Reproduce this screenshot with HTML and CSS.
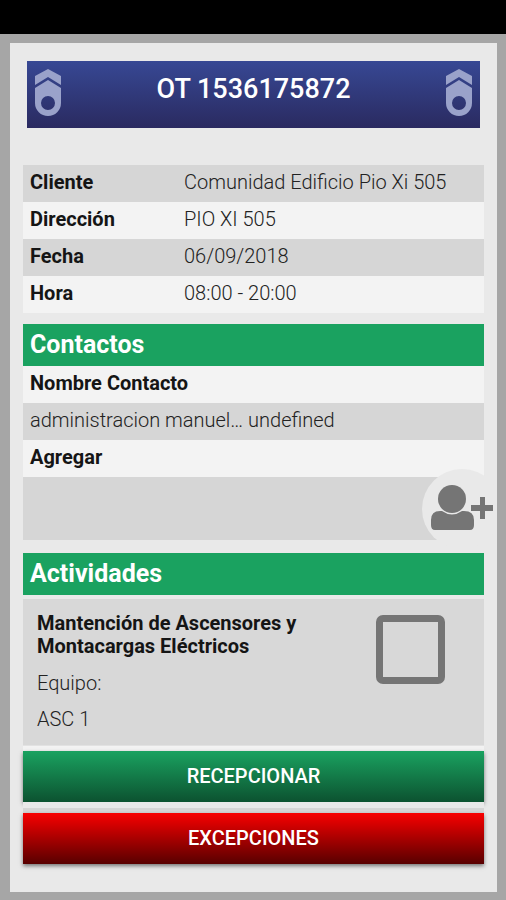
FILE: index.html
```
<!DOCTYPE html>
<html lang="es">
<head>
    <meta charset="UTF-8">
    <meta name="viewport" content="width=device-width, initial-scale=1.0">
    <title>OT 1536175872</title>
    <link rel="stylesheet" href="styles.css">
</head>
<body>
    <div class="status-bar"></div>

    <div class="container">
        <div class="header">
            <svg class="logo" viewBox="0 0 26 48" aria-hidden="true">
                <path d="M0 16V7L13 0l13 7v9L13 8z"/>
                <path fill-rule="evenodd" d="M0 19l13-8 13 8v15a13 13 0 0 1-26 0zM13 27a7 7 0 1 0 0 14 7 7 0 0 0 0-14z"/>
            </svg>
            <h1>OT 1536175872</h1>
            <svg class="logo" viewBox="0 0 26 48" aria-hidden="true">
                <path d="M0 16V7L13 0l13 7v9L13 8z"/>
                <path fill-rule="evenodd" d="M0 19l13-8 13 8v15a13 13 0 0 1-26 0zM13 27a7 7 0 1 0 0 14 7 7 0 0 0 0-14z"/>
            </svg>
        </div>

        <div class="content">
            <table class="info">
                <tr><th>Cliente</th><td>Comunidad Edificio Pio Xi 505</td></tr>
                <tr><th>Dirección</th><td>PIO XI 505</td></tr>
                <tr><th>Fecha</th><td>06/09/2018</td></tr>
                <tr><th>Hora</th><td>08:00 - 20:00</td></tr>
            </table>

            <!-- Contactos -->
            <h2>Contactos</h2>
            <div class="contact-row title">Nombre Contacto</div>
            <div class="contact-row dark">administracion manuel… undefined</div>
            <div class="contact-row title">Agregar</div>
            <div class="add-row">
                <button class="add-button" aria-label="Agregar contacto">
                    <svg viewBox="0 0 80 80" aria-hidden="true">
                        <circle class="add-circle" cx="40" cy="40" r="40"/>
                        <circle cx="30" cy="30" r="14"/>
                        <path d="M9 56v-5q0-9 9-9h2q10 7 20 0h2q10 0 10 9v5q0 5-4 5H13q-4 0-4-5z"/>
                        <path d="M58 28h5v8h8v6h-8v8h-5v-8h-9v-6h9z"/>
                    </svg>
                </button>
            </div>

            <!-- Actividades -->
            <h2>Actividades</h2>
            <div class="activity">
                <div class="activity-text">
                    <label for="activity1">Mantención de Ascensores y Montacargas Eléctricos</label>
                    <p>Equipo:</p>
                    <p>ASC 1</p>
                </div>
                <input type="checkbox" id="activity1">
            </div>

            <div class="actions">
                <button class="btn btn-green">RECEPCIONAR</button>
                <div class="divider"></div>
                <button class="btn btn-red">EXCEPCIONES</button>
            </div>
        </div>
    </div>
</body>
</html>
```

FILE: styles.css
```
* {
    margin: 0;
    padding: 0;
    box-sizing: border-box;
    font-family: Roboto, "Liberation Sans", sans-serif;
}

body {
    background-color: #a6a6a6;
    color: #151515;
    font-size: 20px;
}

.status-bar {
    height: 34px;
    background-color: #000;
}

.container {
    margin: 9px 9px 8px 10px;
    padding: 18px 13px 28px;
    background-color: #e9e9e9;
}

.header {
    display: flex;
    justify-content: space-between;
    align-items: flex-start;
    height: 67px;
    margin: 0 4px 37px;
    padding: 8px;
    background: linear-gradient(#374894, #2a2a60);
}

.header h1 {
    color: #fff;
    font-size: 27px;
    font-weight: 500;
    line-height: 40px;
}

.logo {
    width: 26px;
    height: 48px;
    fill: #9aa2ca;
}

.info {
    width: 100%;
    margin-bottom: 11px;
    border-collapse: collapse;
    background-color: #f3f3f3;
}

.info tr:nth-child(odd) {
    background-color: #d6d6d6;
}

.info th,
.info td {
    height: 37px;
    padding: 0 7px 4px;
    line-height: 24px;
    text-align: left;
}

.info th {
    width: 154px;
    font-weight: 700;
}

.info td {
    color: #222;
    font-weight: 300;
}

h2 {
    padding: 0 7px;
    background-color: #1aa260;
    color: #fff;
    font-size: 25px;
    font-weight: 700;
    line-height: 42px;
}

.contact-row {
    height: 37px;
    padding: 0 7px;
    background-color: #f3f3f3;
    line-height: 34px;
}

.contact-row.title {
    font-weight: 700;
}

.contact-row.dark {
    background-color: #d6d6d6;
    color: #222;
    font-weight: 300;
}

.add-row {
    position: relative;
    height: 63px;
    margin-bottom: 13px;
    background-color: #d6d6d6;
}

/* boton redondo sobre el borde de la fila */
.add-button {
    position: absolute;
    top: -8px;
    right: -13px;
    width: 75px;
    height: 80px;
    overflow: hidden;
    border: none;
    background: none;
    cursor: pointer;
}

.add-button svg {
    display: block;
    width: 80px;
    height: 80px;
    fill: #757575;
}

.add-circle {
    fill: #e9e9e9;
}

.activity {
    display: flex;
    justify-content: space-between;
    align-items: flex-start;
    margin-top: 4px;
    padding: 13px 39px 8px 14px;
    border-bottom: 1px solid #e2e2e2;
    background-color: #d8d8d8;
}

.activity-text {
    width: 290px;
}

.activity label {
    display: block;
    margin-bottom: 7px;
    font-weight: 700;
    line-height: 23px;
}

.activity p {
    color: #222;
    font-weight: 300;
    line-height: 36px;
}

.activity input {
    appearance: none;
    width: 69px;
    height: 69px;
    margin-top: 3px;
    border: 7px solid #757575;
    border-radius: 7px;
    cursor: pointer;
}

.actions {
    padding-top: 5px;
    background-color: #f3f3f3;
}

.btn {
    display: block;
    width: 100%;
    height: 51px;
    padding-bottom: 2px;
    border: none;
    color: #fff;
    font-size: 20px;
    font-weight: 500;
    box-shadow: 0 2px 4px rgba(0, 0, 0, 0.5);
    cursor: pointer;
}

.btn-green {
    background: linear-gradient(#1aa260, #0c5230);
}

.btn-red {
    background: linear-gradient(#f80000, #580000);
}

.divider {
    height: 11px;
    border-top: 6px solid #e9e9e9;
    background-color: #d6d6d6;
}
```
